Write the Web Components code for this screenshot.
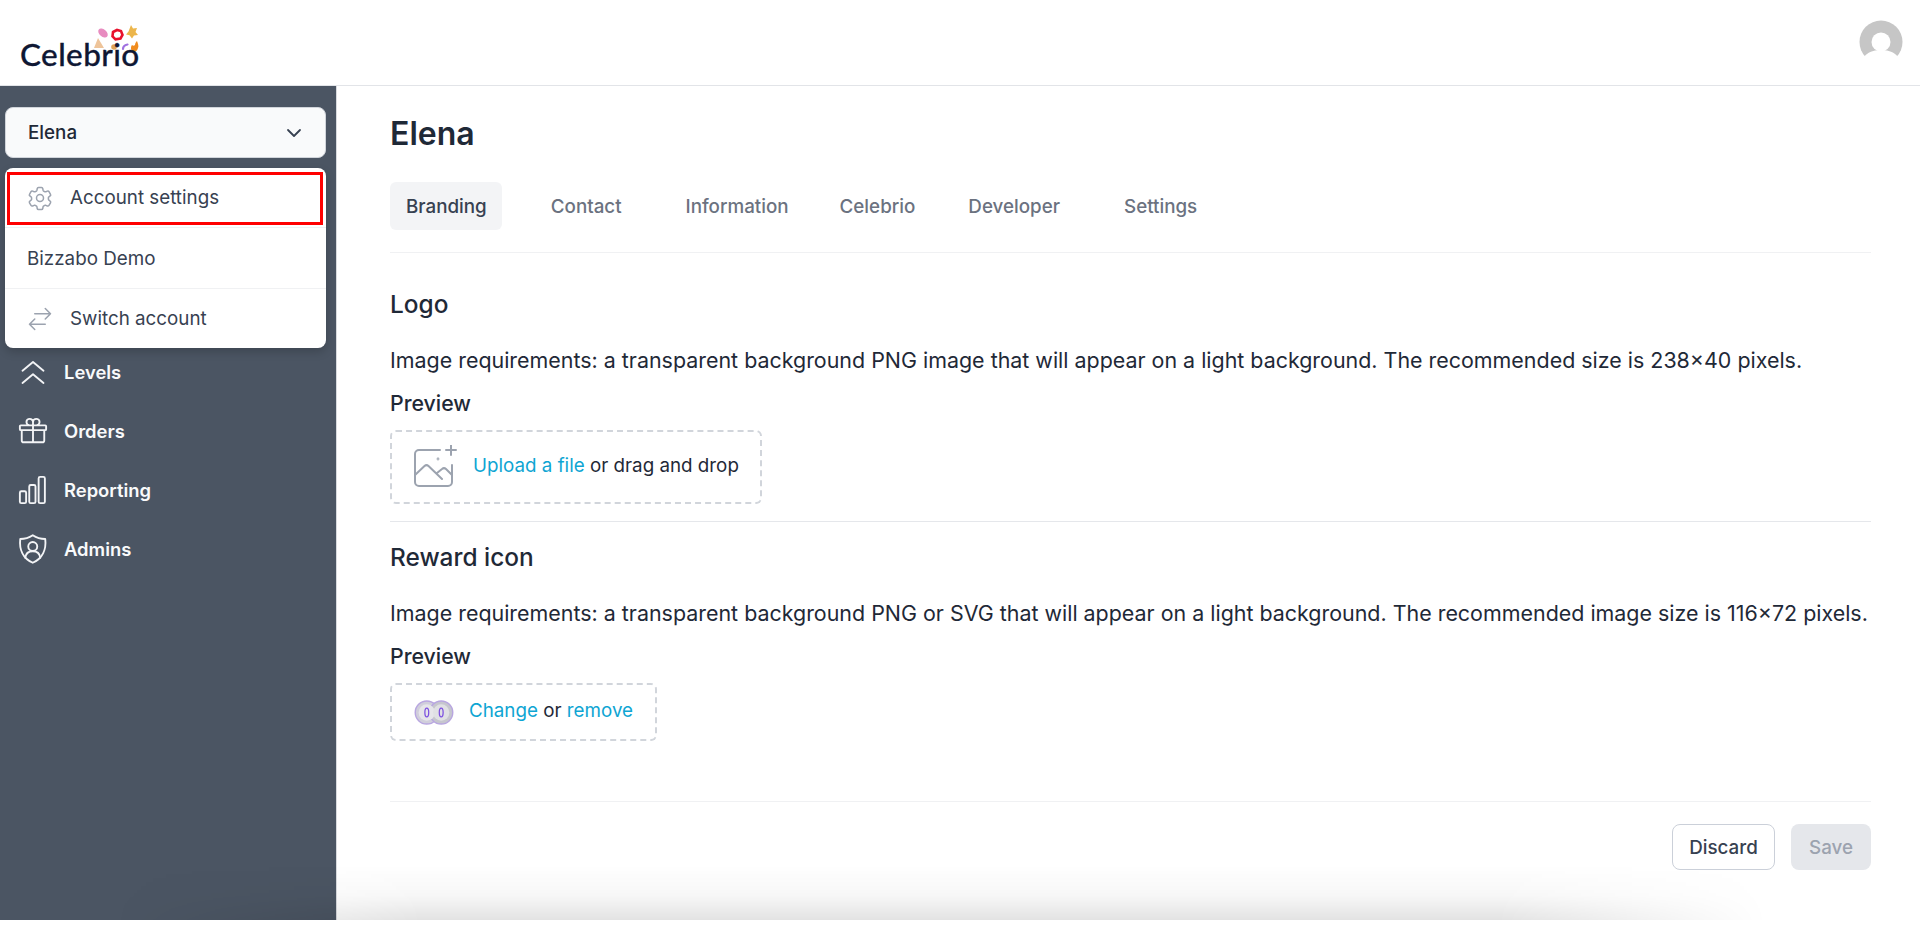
<!DOCTYPE html>
<html lang="en">
<head>
<meta charset="utf-8">
<title>Celebrio</title>
<style>
  html, body { margin: 0; height: 100%; background: #fff; }
  body { font-family: Inter, "Liberation Sans", sans-serif; color: #1f2937; overflow: hidden; }
</style>
</head>
<body>
<celebrio-app></celebrio-app>

<script>
const ICONS = {
  gear: '<path d="M9.6 3.9c.1-.5.6-.9 1.1-.9h2.600c.5 0 1 .4 1.100.9l.2 1.400c.1.4.3.7.7.9l.6.3c.3.2.7.2 1.100.1l1.300-.5c.5-.2 1.100 0 1.400.5l1.300 2.200c.3.5.1 1.100-.3 1.400l-1.100.9c-.3.2-.5.6-.4 1v.7c0 .4.1.8.4 1l1.100.9c.4.3.6.9.3 1.400l-1.300 2.200c-.3.5-.9.7-1.400.5l-1.300-.5c-.4-.1-.8-.1-1.100.1l-.6.3c-.4.2-.6.5-.7.9l-.2 1.400c-.1.5-.6.9-1.100.9h-2.600c-.5 0-1-.4-1.100-.9l-.2-1.400c-.1-.4-.3-.7-.7-.9l-.6-.3c-.3-.2-.7-.2-1.100-.1l-1.300.5c-.5.2-1.100 0-1.400-.5l-1.300-2.200c-.3-.5-.1-1.100.3-1.400l1.100-.9c.3-.2.5-.6.4-1v-.7c0-.4-.1-.8-.4-1l-1.100-.9c-.4-.3-.6-.9-.3-1.400l1.300-2.200c.3-.5.9-.7 1.400-.5l1.300.5c.4.1.8.1 1.100-.1l.6-.3c.4-.2.6-.5.7-.9z"/><circle cx="12" cy="12" r="3"/>',
  swap: '<path d="M7.5 21 3 16.5m0 0L7.5 12M3 16.5h13.5m0-13.5L21 7.5m0 0L16.500 12M21 7.500H7.500"/>',
  levels: '<path d="M3.600 20.800l8.400-7 8.400 7M3.600 11l8.400-7 8.400 7"/>',
  gift: '<path d="M21 11.250v8.250a1.500 1.500 0 0 1-1.500 1.500h-15a1.500 1.500 0 0 1-1.500-1.500v-8.250M12 4.875A2.625 2.625 0 1 0 9.375 7.500H12m0-2.625V7.500m0-2.625A2.625 2.625 0 1 1 14.625 7.500H12m0 0V21M2.250 11.250h19.500c.4 0 .75-.35.75-.75V8.250c0-.4-.35-.75-.75-.75H2.250c-.4 0-.75.35-.75.75v2.250c0 .4.35.75.75.75Z"/>',
  bars: '<rect x="1.500" y="13" width="5" height="9.500" rx="1.200"/><rect x="9" y="8" width="5" height="14.500" rx="1.200"/><rect x="16.500" y="1.500" width="5" height="21" rx="1.200"/>',
  shield: '<path d="M11.800 1c3 2 6.200 3 10 3 .9 8-2 15.500-10 19C3.800 19.500.9 12 1.800 4c3.800 0 7-1 10-3Z"/><circle cx="11.800" cy="10" r="3.600"/><path d="M5.800 19c.4-3.500 3-5.200 6-5.200s5.600 1.700 6 5.200"/>'
};

function icon(name, size, color, width) {
  return `<svg width="${size}" height="${size}" viewBox="0 0 24 24" fill="none" stroke="${color}" stroke-width="${width}" stroke-linecap="round" stroke-linejoin="round">${ICONS[name]}</svg>`;
}

class CelebrioLogo extends HTMLElement {
  connectedCallback() {
    this.attachShadow({ mode: 'open' });
    this.shadowRoot.innerHTML = `
      <style>
        :host { display: block; position: relative; width: 125px; height: 60px; }
        .word {
          position: absolute; left: 0; bottom: 0;
          font: 500 31.500px/40px Lato, "Open Sans", sans-serif;
          letter-spacing: .4px;
          -webkit-text-stroke: .3px #0f1733;
          color: #0f1733;
        }
        svg { position: absolute; left: 70px; top: 9px; }
      </style>
      <svg width="60" height="40" viewBox="0 0 60 40">
        <ellipse cx="13" cy="10" rx="5.500" ry="3.500" transform="rotate(40 13 10)" fill="#e88cc0"/>
        <path d="M23 9l4-2 4 1 1.500 4-2 3.500-5 .8-3-3z" fill="#fff" stroke="#e8112d" stroke-width="2.600"/>
        <path d="M41 2l2 3.500 4-.5-1.500 4 2.500 3-4 .5-2 3-2.500-3.200-3.500-.8 2.500-3z" fill="#ecb64c"/>
        <path d="M4 25l4-10 6 10z" fill="#eec49a"/>
        <circle cx="24" cy="24" r="2.800" fill="#e0a45a"/>
        <path d="M33 26c0-3 2-4 4.500-4.500" fill="none" stroke="#a070e0" stroke-width="2.200" stroke-linecap="round"/>
        <path d="M44 29c-3-1-4-4-2-7 1 1 2 1 3 0 0-2 1-3 2-4 1 3 2 5 1 7-.5 2-2 4-4 4z" fill="#f08c1e"/>
      </svg>
      <span class="word">Celebrio</span>
    `;
  }
}

class AppHeader extends HTMLElement {
  connectedCallback() {
    this.attachShadow({ mode: 'open' });
    this.shadowRoot.innerHTML = `
      <style>
        :host {
          display: flex; align-items: center; justify-content: space-between;
          height: 85px; padding: 0 17px 0 20px;
          background: #fff; border-bottom: 1px solid #e2e4e8;
        }
        celebrio-logo { margin-top: 2px; }
        svg { display: block; margin-bottom: 2px; }
      </style>
      <celebrio-logo></celebrio-logo>
      <svg width="44" height="44" viewBox="0 0 44 44">
        <circle cx="22" cy="22" r="21.500" fill="#c6c6c6"/>
        <circle cx="22" cy="22" r="9.500" fill="#fff"/>
        <path d="M5 37c3-4 8-7 17-7s14 3 17 7v7H5z" fill="#fff"/>
      </svg>
    `;
  }
}

class NavItem extends HTMLElement {
  connectedCallback() {
    this.attachShadow({ mode: 'open' });
    this.shadowRoot.innerHTML = `
      <style>
        :host {
          display: flex; align-items: center; gap: 16px;
          height: 59px; padding-left: 18px;
          color: #f9fafb; font-size: 18.400px; font-weight: 600;
        }
        .ico { display: flex; width: 30px; justify-content: center; }
      </style>
      <span class="ico">${icon(this.getAttribute('icon'), 30, '#f3f4f6', 1.500)}</span>
      <slot></slot>
    `;
  }
}

class MenuRow extends HTMLElement {
  connectedCallback() {
    const ic = this.getAttribute('icon');
    this.attachShadow({ mode: 'open' });
    this.shadowRoot.innerHTML = `
      <style>
        :host {
          display: flex; align-items: center; gap: 16px;
          height: ${this.getAttribute('h')}px; padding-left: ${ic ? 21 : 22}px; box-sizing: border-box;
          color: #374151; font-size: 18.800px; font-weight: 400;
        }
        :host(:not(:last-of-type)) { border-bottom: 1px solid #f0f1f3; }
        .ico { display: flex; }
      </style>
      ${ic ? `<span class="ico">${icon(ic, 28, '#9ca3af', 1.300)}</span>` : ''}
      <slot></slot>
    `;
  }
}

class AccountMenu extends HTMLElement {
  connectedCallback() {
    this.attachShadow({ mode: 'open' });
    this.shadowRoot.innerHTML = `
      <style>
        :host { display: block; position: absolute; left: 5px; top: 21px; width: 321px; z-index: 2; }
        .select {
          display: flex; align-items: center; justify-content: space-between;
          height: 51px; box-sizing: border-box; padding: 0 21px 0 22px;
          background: #f9fafb; border: 1px solid #d1d5db; border-radius: 8px;
          color: #1f2937; font-size: 18.800px; font-weight: 500;
        }
        .select svg { display: block; }
        .list {
          position: relative; margin-top: 10px; background: #fff;
          border-radius: 8px; overflow: hidden;
          box-shadow: 0 4px 10px rgba(0,0,0,.18);
        }
        .mark {
          position: absolute; left: 2px; top: 4px; width: 316px; height: 53px;
          box-sizing: border-box; border: 3px solid #f00; pointer-events: none;
        }
      </style>
      <div class="select">
        <span>Elena</span>
        <svg width="20" height="20" viewBox="0 0 20 20" fill="none" stroke="#374151" stroke-width="1.800" stroke-linecap="round" stroke-linejoin="round"><path d="m4 7 6 6 6-6"/></svg>
      </div>
      <div class="list">
        <menu-row h="60" icon="gear">Account settings</menu-row>
        <menu-row h="61">Bizzabo Demo</menu-row>
        <menu-row h="59" icon="swap">Switch account</menu-row>
        <div class="mark"></div>
      </div>
    `;
  }
}

class SideBar extends HTMLElement {
  connectedCallback() {
    this.attachShadow({ mode: 'open' });
    this.shadowRoot.innerHTML = `
      <style>
        :host {
          display: block; position: relative; flex: 0 0 336px;
          background: #4b5563; border-right: 1px solid #d8dade;
          padding-top: 256px; box-sizing: content-box;
        }
      </style>
      <account-menu></account-menu>
      <nav-item icon="levels">Levels</nav-item>
      <nav-item icon="gift">Orders</nav-item>
      <nav-item icon="bars">Reporting</nav-item>
      <nav-item icon="shield">Admins</nav-item>
    `;
  }
}

class TabBar extends HTMLElement {
  connectedCallback() {
    this.attachShadow({ mode: 'open' });
    this.shadowRoot.innerHTML = `
      <style>
        :host { display: flex; padding-bottom: 22px; border-bottom: 1px solid #f0f1f3; }
        span {
          height: 48px; line-height: 50px; padding: 0 16px; box-sizing: border-box;
          border-radius: 6px; color: #6b7280; font-size: 18.800px; font-weight: 500;
        }
        .on { background: #f3f4f6; color: #374151; padding-right: 15px; }
      </style>
      <span class="on">Branding</span>
      <span style="margin-left:33px">Contact</span>
      <span style="margin-left:32px">Information</span>
      <span style="margin-left:19px">Celebrio</span>
      <span style="margin-left:21px">Developer</span>
      <span style="margin-left:32px">Settings</span>
    `;
  }
}

class UploadBox extends HTMLElement {
  connectedCallback() {
    this.attachShadow({ mode: 'open' });
    this.shadowRoot.innerHTML = `
      <style>
        :host {
          display: inline-flex; align-items: center; box-sizing: border-box;
          border: 2px dashed #d1d5db; border-radius: 6px;
          color: #1f2937; font-size: 18.800px;
        }
      </style>
      <slot></slot>
    `;
  }
}

class BrandSection extends HTMLElement {
  connectedCallback() {
    this.attachShadow({ mode: 'open' });
    this.shadowRoot.innerHTML = `
      <style>
        :host { display: block; }
        h2 { margin: 0; padding-bottom: 2px; font-size: 24.400px; line-height: 30px; font-weight: 500; color: #1f2937; }
        p { margin: 25px 0 15px; font-size: 21.430px; line-height: 28px; color: #1f2937; white-space: nowrap; }
        h3 { margin: 0 0 13px; font-size: 21.300px; line-height: 28px; font-weight: 500; color: #1f2937; }
        .box { display: block; line-height: 0; }
      </style>
      <h2>${this.getAttribute('heading')}</h2>
      <p>${this.getAttribute('note')}</p>
      <h3>Preview</h3>
      <div class="box"><slot></slot></div>
    `;
  }
}

class ActionBar extends HTMLElement {
  connectedCallback() {
    this.attachShadow({ mode: 'open' });
    this.shadowRoot.innerHTML = `
      <style>
        :host {
          display: flex; justify-content: flex-end; gap: 16px;
          margin-top: 60px; padding-top: 22px; border-top: 1px solid #f0f1f3;
        }
        button {
          height: 46px; box-sizing: border-box; border-radius: 8px;
          font: 500 18.800px Inter, "Liberation Sans", sans-serif;
        }
        .discard { width: 103px; background: #fff; border: 1px solid #cbd0d9; color: #374151; }
        .save { width: 80px; background: #e5e7eb; border: 0; color: #9ca3af; }
      </style>
      <button class="discard">Discard</button>
      <button class="save">Save</button>
    `;
  }
}

class CelebrioApp extends HTMLElement {
  connectedCallback() {
    this.attachShadow({ mode: 'open' });
    this.shadowRoot.innerHTML = `
      <style>
        :host { display: block; position: relative; height: 920px; overflow: hidden; background: #fff; }
        .body { display: flex; height: 834px; }
        main { flex: 1; min-width: 0; padding: 30px 49px 0 53px; }
        h1 { margin: 0 0 30px; font-size: 32px; line-height: 36px; font-weight: 600; color: #1f2937; }
        .rule { height: 1px; background: #e5e7eb; margin: 17px 0 20px; }
        brand-section:first-of-type { margin-top: 36px; }
        .logo-box { width: 372px; height: 74px; padding-left: 22px; }
        .reward-box { width: 267px; height: 58px; padding-left: 22px; }
        .gap { margin-left: 15px; line-height: 28px; padding-bottom: 3px; }
        .gap2 { margin-left: 15px; line-height: 28px; padding-bottom: 3px; }
        .logo-box svg, .reward-box svg { flex: none; }
        a { color: #0ea5d3; text-decoration: none; }
        .fade {
          position: absolute; left: 0; right: 0; bottom: 0; height: 55px; pointer-events: none;
          background: linear-gradient(to top, rgba(0,0,0,.11), rgba(0,0,0,.03) 45%, transparent);
          -webkit-mask-image: linear-gradient(to right, transparent 6%, #000 22%, #000 78%, transparent 92%);
          z-index: 3;
        }
      </style>
      <app-header></app-header>
      <div class="body">
        <side-bar></side-bar>
        <main>
          <h1>Elena</h1>
          <tab-bar></tab-bar>
          <brand-section heading="Logo" note="Image requirements: a transparent background PNG image that will appear on a light background. The recommended size is 238×40 pixels.">
            <upload-box class="logo-box">
              <svg width="44" height="44" viewBox="0 0 44 44" fill="none" stroke="#9ca3af" stroke-width="2" stroke-linecap="round" stroke-linejoin="round">
                <path d="M26 5H5a4 4 0 0 0-4 4v28a4 4 0 0 0 4 4h29a4 4 0 0 0 4-4V20"/>
                <path d="M1 30l9.500-9a3 3 0 0 1 4 0L28 34M23 28l5-4a3 3 0 0 1 4 0l6 6"/>
                <path d="M37 0v10M32 5h10"/>
                <circle cx="24" cy="14" r=".4"/>
              </svg>
              <span class="gap"><a>Upload a file</a> or drag and drop</span>
            </upload-box>
          </brand-section>
          <div class="rule"></div>
          <brand-section heading="Reward icon" note="Image requirements: a transparent background PNG or SVG that will appear on a light background. The recommended image size is 116×72 pixels.">
            <upload-box class="reward-box">
              <svg width="40" height="25" viewBox="0 0 41 26">
                <circle cx="13" cy="13" r="12" fill="#d0cedb" stroke="#b8a6e0" stroke-width="1.500"/>
                <circle cx="28" cy="13" r="12" fill="#c6c6ce" stroke="#b8a6e0" stroke-width="1.500"/>
                <circle cx="13" cy="13" r="8.500" fill="#e6e5ea"/>
                <circle cx="28" cy="13" r="8.500" fill="#e0e0e4"/>
                <ellipse cx="13" cy="13" rx="2" ry="4.500" fill="none" stroke="#7c4fe0" stroke-width="1.300"/>
                <ellipse cx="28" cy="13" rx="2" ry="4.500" fill="none" stroke="#7c4fe0" stroke-width="1.300"/>
              </svg>
              <span class="gap2"><a>Change</a> or <a>remove</a></span>
            </upload-box>
          </brand-section>
          <action-bar></action-bar>
        </main>
      </div>
      <div class="fade"></div>
    `;
  }
}

customElements.define('celebrio-logo', CelebrioLogo);
customElements.define('app-header', AppHeader);
customElements.define('nav-item', NavItem);
customElements.define('menu-row', MenuRow);
customElements.define('account-menu', AccountMenu);
customElements.define('side-bar', SideBar);
customElements.define('tab-bar', TabBar);
customElements.define('upload-box', UploadBox);
customElements.define('brand-section', BrandSection);
customElements.define('action-bar', ActionBar);
customElements.define('celebrio-app', CelebrioApp);
</script>
</body>
</html>
